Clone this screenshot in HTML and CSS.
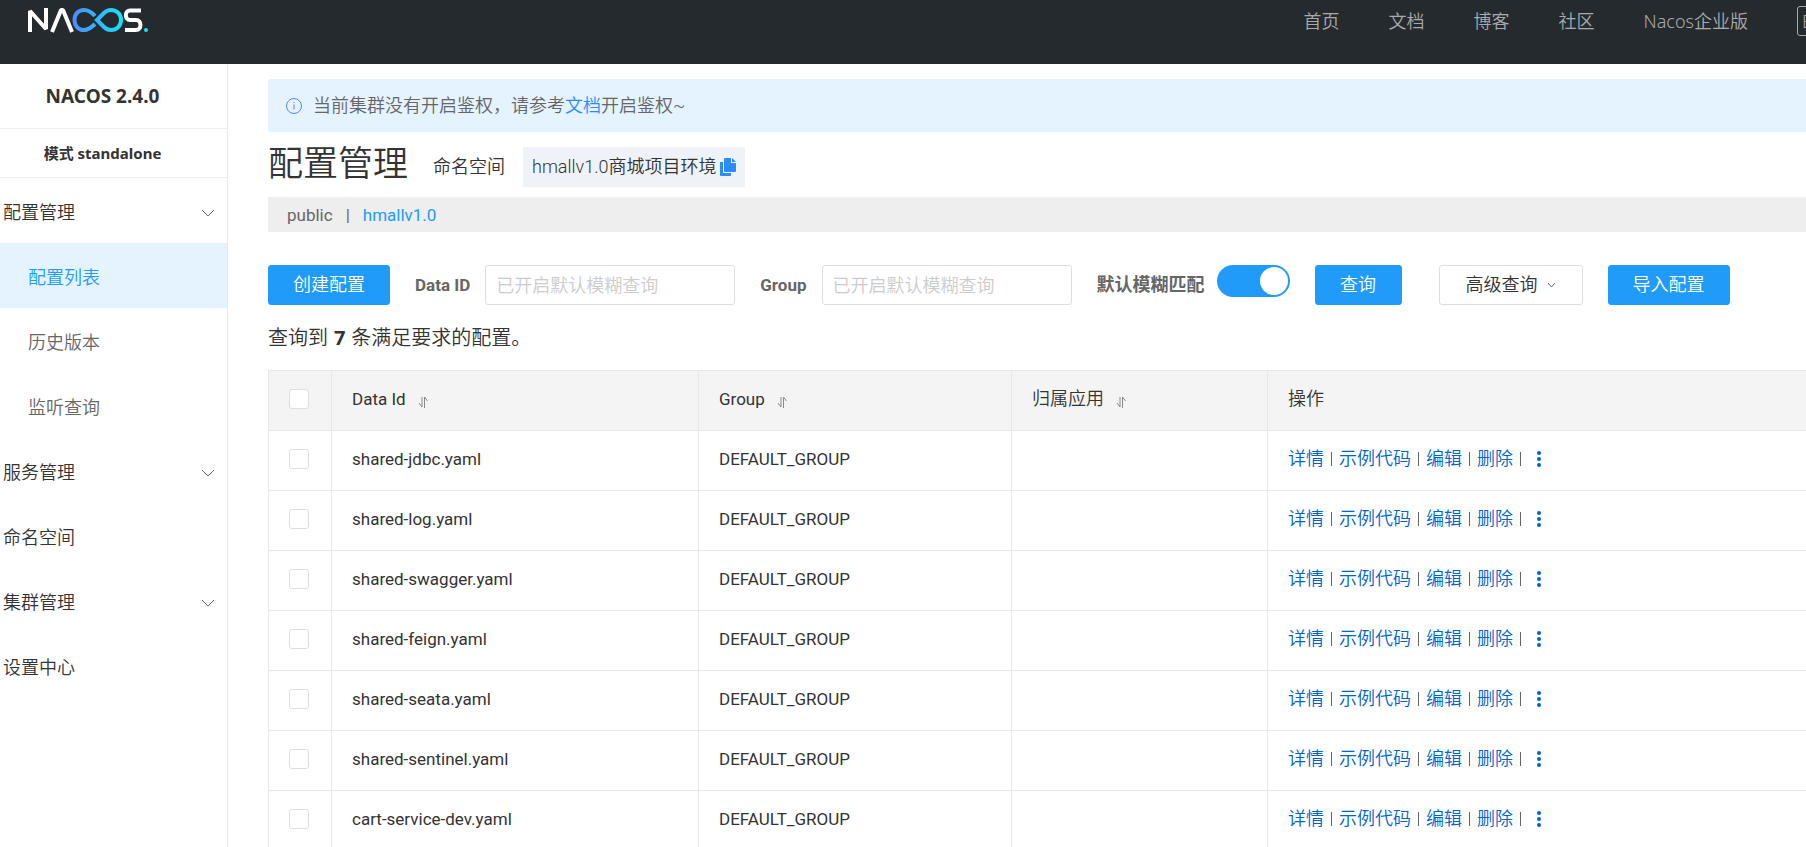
FILE: index.html
```html
<!DOCTYPE html>
<html lang="zh-CN">
<head>
    <meta charset="UTF-8">
    <meta name="viewport" content="width=device-width, initial-scale=1.0">
    <title>Nacos</title>
    <link rel="stylesheet" href="styles.css">
</head>
<body>
<header class="header">
    <a class="logo" href="#" aria-label="Nacos">
        <svg width="121" height="25" viewBox="0 0 121 25" fill="none">
            <defs>
                <linearGradient id="loop" x1="45" y1="0" x2="95" y2="0" gradientUnits="userSpaceOnUse">
                    <stop offset="0" stop-color="#4a8cff"/>
                    <stop offset="1" stop-color="#15e4fa"/>
                </linearGradient>
            </defs>
            <path d="M2 24V3L18 21V0" stroke="#fff" stroke-width="4" stroke-linejoin="bevel"/>
            <path d="M24 24L33 2H35L44 24" stroke="#fff" stroke-width="4" stroke-linejoin="bevel"/>
            <path d="M67 8C63 3.500 60 2 56 2C50 2 46.500 6.500 46.500 12S50 22 56 22C60 22 63 20 67 16M69 12L76 5C78 3 80.500 2 83 2C89 2 93 6.500 93 12S89 22 83 22C80.500 22 78 21 76 19Z" stroke="url(#loop)" stroke-width="4"/>
            <path d="M113 2.500H102C96.500 2.500 96.500 12 102 12H108C114 12 114 22 108 22H97" stroke="#fff" stroke-width="4"/>
            <circle cx="118" cy="22" r="2" fill="#15e4fa"/>
        </svg>
    </a>
    <nav class="top-nav">
        <a href="#">首页</a>
        <a href="#">文档</a>
        <a href="#">博客</a>
        <a href="#">社区</a>
        <a href="#">Nacos企业版</a>
        <button class="lang" type="button">En</button>
    </nav>
</header>

<div class="layout">
    <aside class="sidebar">
        <h1 class="version">NACOS 2.4.0</h1>
        <h2 class="mode">模式 standalone</h2>
        <nav class="menu">
            <a href="#">配置管理 <svg class="chevron" width="14" height="8" viewBox="0 0 14 8"><path d="M1 1l6 6 6-6"/></svg></a>
            <a class="sub active" href="#">配置列表</a>
            <a class="sub" href="#">历史版本</a>
            <a class="sub" href="#">监听查询</a>
            <a href="#">服务管理 <svg class="chevron" width="14" height="8" viewBox="0 0 14 8"><path d="M1 1l6 6 6-6"/></svg></a>
            <a href="#">命名空间</a>
            <a href="#">集群管理 <svg class="chevron" width="14" height="8" viewBox="0 0 14 8"><path d="M1 1l6 6 6-6"/></svg></a>
            <a href="#">设置中心</a>
        </nav>
    </aside>

    <main class="content">
        <div class="notice">
            <svg width="18" height="18" viewBox="0 0 18 18" fill="none" stroke="#5584ff"><circle cx="9" cy="9" r="7.500"/><path d="M9 5v1M9 7.500v5"/></svg>
            <p>当前集群没有开启鉴权，请参考<a href="#">文档</a>开启鉴权~</p>
        </div>

        <div class="title-row">
            <h2 class="title">配置管理</h2>
            <span class="ns-label">命名空间</span>
            <div class="ns-name">
                <span>hmallv1.0商城项目环境</span>
                <button class="copy" type="button" aria-label="复制">
                    <svg width="16" height="18" viewBox="0 0 16 18" fill="#2a8cff"><path d="M5 0h6v5h5v8q0 1-1 1H5q-1 0-1-1V1q0-1 1-1zM12 0l4 4h-4zM0 4h3v10q0 1 1 1h7v2q0 1-1 1H1q-1 0-1-1z"/></svg>
                </button>
            </div>
        </div>

        <div class="namespaces">
            <a href="#">public</a>
            <span>|</span>
            <a class="current" href="#">hmallv1.0</a>
        </div>

        <form class="filters">
            <button class="btn primary create" type="button">创建配置</button>
            <label for="dataId">Data ID</label>
            <input class="text" id="dataId" type="text" placeholder="已开启默认模糊查询">
            <label for="group">Group</label>
            <input class="text" id="group" type="text" placeholder="已开启默认模糊查询">
            <label class="fuzzy" for="fuzzy">默认模糊匹配</label>
            <input class="switch" id="fuzzy" type="checkbox" role="switch" checked>
            <button class="btn primary search" type="button">查询</button>
            <button class="btn advanced" type="button">高级查询 <svg class="chevron" width="9" height="6" viewBox="0 0 9 6"><path d="M1 1l3.500 4L8 1"/></svg></button>
            <button class="btn primary import" type="button">导入配置</button>
        </form>

        <p class="total">查询到 <strong>7</strong> 条满足要求的配置。</p>

        <table class="configs">
            <colgroup>
                <col class="col-check">
                <col class="col-id">
                <col class="col-group">
                <col class="col-app">
                <col>
            </colgroup>
            <thead>
                <tr>
                    <th><input type="checkbox" aria-label="全选"></th>
                    <th>Data Id <svg class="sort" width="10" height="12" viewBox="0 0 10 12"><path d="M1 7l3 4V1M6.500 12V1l3 4"/></svg></th>
                    <th>Group <svg class="sort" width="10" height="12" viewBox="0 0 10 12"><path d="M1 7l3 4V1M6.500 12V1l3 4"/></svg></th>
                    <th class="cn">归属应用 <svg class="sort" width="10" height="12" viewBox="0 0 10 12"><path d="M1 7l3 4V1M6.500 12V1l3 4"/></svg></th>
                    <th class="cn">操作</th>
                </tr>
            </thead>
            <tbody id="rows"></tbody>
        </table>
    </main>
</div>
<script>
    const configs = [
        "shared-jdbc.yaml",
        "shared-log.yaml",
        "shared-swagger.yaml",
        "shared-feign.yaml",
        "shared-seata.yaml",
        "shared-sentinel.yaml",
        "cart-service-dev.yaml"
    ];

    const rows = document.getElementById("rows");
    for (const id of configs) {
        const tr = document.createElement("tr");
        tr.innerHTML = `
            <td><input type="checkbox" aria-label="${id}"></td>
            <td>${id}</td>
            <td>DEFAULT_GROUP</td>
            <td></td>
            <td class="cn"><div class="actions">
                <a href="#">详情</a><i></i><a href="#">示例代码</a><i></i><a href="#">编辑</a><i></i><a href="#">删除</a><i></i>
                <button class="more" type="button" aria-label="更多"><svg width="6" height="18" viewBox="0 0 6 18" fill="#0064c8"><circle cx="3" cy="3" r="2"/><circle cx="3" cy="9" r="2"/><circle cx="3" cy="15" r="2"/></svg></button>
            </div></td>`;
        rows.appendChild(tr);
    }
</script>
</body>
</html>
```

FILE: styles.css
```css
* {
    box-sizing: border-box;
}

body {
    margin: 0;
    height: 100vh;
    overflow: hidden;
    display: flex;
    flex-direction: column;
    font-family: Roboto, "Noto Sans CJK SC", sans-serif;
    font-size: 18px;
    font-weight: 350;
    line-height: 24px;
    color: #333;
    background: #fff;
}

h1, h2, p {
    margin: 0;
}

a {
    text-decoration: none;
    color: inherit;
}

button, input {
    font: inherit;
    color: inherit;
    margin: 0;
}

.header {
    flex: none;
    height: 64px;
    padding: 0 0 0 28px;
    display: flex;
    align-items: flex-start;
    justify-content: space-between;
    background: #252a2f;
}

.logo {
    padding-top: 8px;
    line-height: 0;
}

.top-nav {
    display: flex;
    gap: 49px;
    padding-top: 6px;
    line-height: 30px;
    font-family: "Noto Sans", "Noto Sans CJK SC", sans-serif;
    color: #a8aaac;
    white-space: nowrap;
}

.lang {
    width: 48px;
    height: 30px;
    padding: 0 4px;
    margin-right: -39px;
    flex: none;
    background: none;
    border: 1px solid #a8aaac;
    border-radius: 3px;
    text-align: left;
    line-height: 26px;
}

.layout {
    flex: 1;
    min-height: 0;
    display: flex;
}

.sidebar {
    flex: none;
    width: 228px;
    border-right: 1px solid #e6e7eb;
}

.version, .mode {
    padding-right: 22px;
    text-align: center;
    font-family: "Noto Sans", "Noto Sans CJK SC", sans-serif;
    font-weight: 700;
    border-bottom: 1px solid #eee;
}

.version {
    font-size: 19px;
    line-height: 64px;
}

.mode {
    font-size: 15px;
    line-height: 48px;
}

.menu a {
    display: flex;
    align-items: center;
    justify-content: space-between;
    height: 65px;
    padding: 5px 12px 0 3px;
}

.menu .sub {
    padding-left: 28px;
    color: #666;
}

.menu .active {
    background: #e4f3fe;
    color: #209bfa;
}

.chevron {
    fill: none;
    stroke: #666;
}

.content {
    flex: 1;
    min-width: 0;
    padding: 15px 0 0 40px;
}

.notice {
    display: flex;
    align-items: center;
    gap: 10px;
    height: 53px;
    padding: 0 17px;
    border-radius: 3px 0 0 3px;
    background: #e4f3fe;
    color: #666;
}

.notice a {
    color: #2a8cff;
}

.title-row {
    display: flex;
    align-items: center;
    height: 65px;
}

.title {
    font-size: 35px;
    font-weight: 350;
    line-height: 48px;
}

.ns-label {
    margin: 4px 18px 0 25px;
}

.ns-name {
    display: flex;
    align-items: center;
    gap: 3px;
    height: 40px;
    margin-top: 4px;
    padding: 0 9px;
    background: #eff3f8;
}

.copy, .more {
    padding: 0;
    border: 0;
    background: none;
    line-height: 0;
}

.namespaces {
    display: flex;
    align-items: center;
    gap: 13px;
    height: 35px;
    padding: 0 19px;
    background: #eee;
    color: #666;
    font-size: 17px;
    font-weight: 400;
}

.namespaces .current {
    color: #209bfa;
}

.filters {
    display: flex;
    align-items: center;
    padding: 33px 0 16px;
}

.filters label {
    margin-left: 25px;
    font-size: 17px;
    font-weight: 700;
    color: #666;
    white-space: nowrap;
}

.filters .fuzzy {
    font-size: 18px;
}

.text {
    width: 250px;
    height: 40px;
    margin-left: 15px;
    padding: 0 10px;
    border: 1px solid #dcdee3;
    border-radius: 3px;
}

.text::placeholder {
    color: #ccc;
}

.btn {
    flex: none;
    height: 40px;
    padding: 0;
    border: 1px solid #dcdee3;
    border-radius: 3px;
    background: #fff;
    white-space: nowrap;
}

.primary {
    border-color: #209bfa;
    background: #209bfa;
    color: #fff;
}

.create, .import {
    width: 122px;
}

.search {
    width: 87px;
    margin-left: 25px;
}

.advanced {
    display: flex;
    align-items: center;
    justify-content: center;
    gap: 9px;
    width: 144px;
    margin-left: 37px;
}

.import {
    margin-left: 25px;
}

.switch {
    appearance: none;
    flex: none;
    align-self: flex-start;
    width: 73px;
    height: 32px;
    margin-left: 12px;
    padding: 2px;
    border-radius: 16px;
    background: #ccc;
}

.switch::before {
    content: "";
    display: block;
    width: 28px;
    height: 28px;
    border-radius: 50%;
    background: #fff;
}

.switch:checked {
    background: #209bfa;
}

.switch:checked::before {
    margin-left: auto;
}

.total {
    padding: 5px 0 20px;
    font-size: 20px;
}

.total strong {
    margin: 0 1px;
    font-family: "Noto Sans", sans-serif;
    font-weight: 700;
}

.configs {
    width: 100%;
    table-layout: fixed;
    border-collapse: collapse;
}

.configs th, .configs td {
    height: 60px;
    padding: 0 20px 3px;
    border: 1px solid #e6e7eb;
    border-right: 0;
    text-align: left;
    font-size: 17px;
    font-weight: 400;
}

.configs th {
    background: #f4f4f4;
}

.configs .cn {
    font-size: 18px;
    font-weight: 350;
}

.configs input {
    appearance: none;
    display: block;
    width: 20px;
    height: 20px;
    border: 1px solid #dcdee3;
    border-radius: 3px;
    background: #fff;
}

.configs input:checked {
    background: #209bfa;
}

.col-check {
    width: 63px;
}

.col-id {
    width: 367px;
}

.col-group {
    width: 313px;
}

.col-app {
    width: 256px;
}

.sort {
    margin-left: 8px;
    vertical-align: -3px;
    fill: none;
    stroke: #888;
}

.actions {
    display: flex;
    align-items: center;
    color: #0064c8;
}

.actions i {
    width: 1px;
    height: 14px;
    margin: 0 7px;
    background: #666;
}

.more {
    margin-left: 8px;
}
```
